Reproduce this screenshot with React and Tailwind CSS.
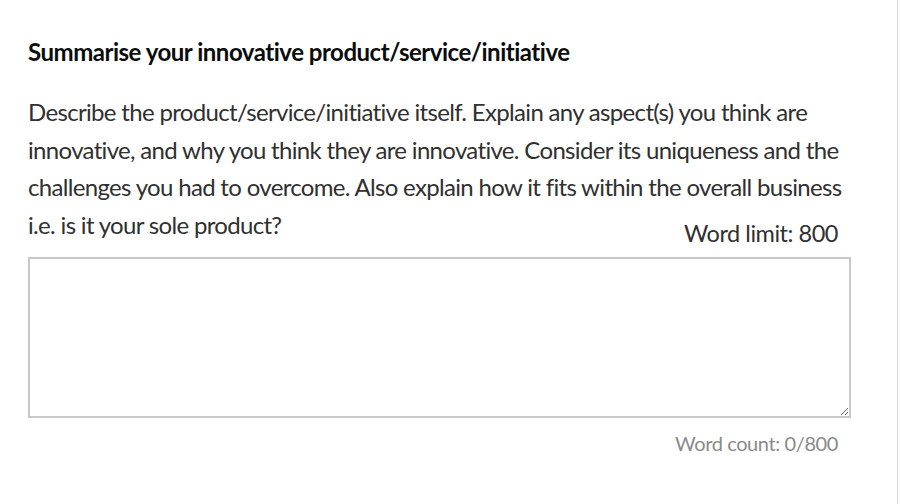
export default function App() {
    return (
        <div className="flex h-[504px] w-[900px] bg-white">
            <div className="w-[897px] pl-7 pr-[46px] pt-[38px]" style={{ fontFamily: "Lato, 'Liberation Sans', sans-serif" }}>
                {/* Question */}
                <h2 className="text-[24px] font-bold leading-[28px] tracking-[-0.02em] text-[#0b0c0c]">
                    Summarise your innovative product/service/initiative
                </h2>
                <p className="mt-[27px] text-[24px] leading-[37.5px] tracking-[-0.028em] text-[#303030]">
                    Describe the product/service/initiative itself. Explain any aspect(s) you think are<br />
                    innovative, and why you think they are innovative. Consider its uniqueness and the<br />
                    challenges you had to overcome. Also explain how it fits within the overall business<br />
                    i.e. is it your sole product?
                </p>
                <div className="-mt-[28px] pr-[13px] text-right text-[23.5px] leading-[37px] tracking-[-0.02em] text-[#303030]">
                    Word limit: 800
                </div>

                {/* Answer */}
                <textarea className="mt-[5px] block h-[161px] w-full resize-y border-2 border-[#c8c8c8] bg-white p-2 outline-none" />
                <div className="mt-[8px] pr-[13px] text-right text-[20px] leading-[34px] tracking-[-0.02em] text-[#8a8a8a]">
                    Word count: 0/800
                </div>
            </div>
            <div className="w-px bg-[#dcdcdc]" />
        </div>
    );
}
